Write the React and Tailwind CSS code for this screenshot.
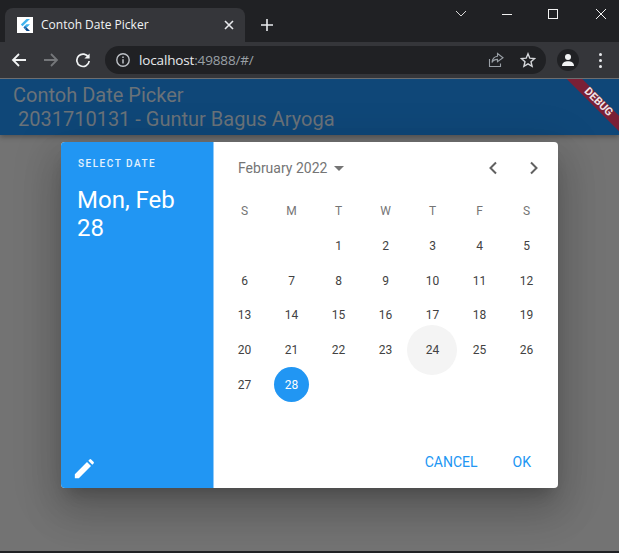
import React from "react";

const font = { fontFamily: "Roboto, sans-serif" };
const days = [
  ["", "", 1, 2, 3, 4, 5],
  [6, 7, 8, 9, 10, 11, 12],
  [13, 14, 15, 16, 17, 18, 19],
  [20, 21, 22, 23, 24, 25, 26],
  [27, 28, "", "", "", "", ""],
];

function FlutterLogo() {
  return (
    <svg width="16" height="16" viewBox="0 0 16 16">
      <rect width="16" height="16" fill="#fff" />
      <path d="M9.5 2 L13 2 L5.5 9.2 L3.8 7.5Z" fill="#42b4ee" />
      <path d="M9.3 7.3 L13 7.3 L9.6 10.8 L7.8 9Z" fill="#42b4ee" />
      <path d="M6.4 10.4 L8 8.8 L9.6 10.6 L8 12.2Z" fill="#1a6fb8" />
      <path d="M8 12.2 L9.6 10.6 L13 14 L9.6 14Z" fill="#0c4a8c" />
    </svg>
  );
}

export default function App() {
  return (
    <div className="w-[619px] h-[553px] overflow-hidden flex flex-col bg-[#202124]" style={font}>
      {/* Title bar */}
      <div className="h-[42px] flex items-end pl-[5px] bg-[#202124] shrink-0">
        <div className="w-[240px] h-[34px] bg-[#35363a] rounded-t-lg flex items-center pl-[12px] pr-[11px]">
          <FlutterLogo />
          <span className="ml-[8px] text-[12px] text-[#f1f3f4] flex-1" style={{ fontFamily: "'Open Sans', Roboto, sans-serif" }}>Contoh Date Picker</span>
          <svg width="10" height="10" viewBox="0 0 10 10"><path d="M1 1 L9 9 M9 1 L1 9" stroke="#e8eaed" strokeWidth="1.6" /></svg>
        </div>
        <svg className="ml-[15px] mb-[10px]" width="14" height="14" viewBox="0 0 14 14"><path d="M7 1 V13 M1 7 H13" stroke="#e8eaed" strokeWidth="1.6" /></svg>
        <div className="flex-1 self-start flex justify-end pt-[8px]">
          <svg className="mr-[35px] mt-[2px]" width="12" height="8" viewBox="0 0 12 8"><path d="M1 1 L6 6 L11 1" stroke="#d8d8d8" fill="none" /></svg>
          <svg className="mr-[36px]" width="10" height="12" viewBox="0 0 10 12"><path d="M0 6.5 H10" stroke="#f2f2f2" /></svg>
          <svg className="mr-[38px]" width="10" height="12" viewBox="0 0 10 12"><rect x="0.5" y="1.5" width="9" height="9" stroke="#f2f2f2" fill="none" /></svg>
          <svg className="mr-[13px]" width="10" height="12" viewBox="0 0 10 12"><path d="M0 1 L10 11 M10 1 L0 11" stroke="#f2f2f2" /></svg>
        </div>
      </div>

      {/* Toolbar */}
      <div className="h-[36px] bg-[#35363a] flex items-center shrink-0">
        <svg className="ml-[11px]" width="16" height="16" viewBox="0 0 16 16"><path d="M15 8 H2 M8 2 L2 8 L8 14" stroke="#f1f3f4" strokeWidth="1.8" fill="none" /></svg>
        <svg className="ml-[16px]" width="16" height="16" viewBox="0 0 16 16"><path d="M1 8 H14 M8 2 L14 8 L8 14" stroke="#75777a" strokeWidth="1.8" fill="none" /></svg>
        <svg className="ml-[16px]" width="16" height="16" viewBox="0 0 16 16"><path d="M13.6 5.5 A6.2 6.2 0 1 0 14.2 9" stroke="#f1f3f4" strokeWidth="1.7" fill="none" /><path d="M14.6 1.4 V6.6 H9.4Z" fill="#f1f3f4" /></svg>
        <div className="ml-[14px] w-[441px] h-[28px] rounded-full bg-[#202124] flex items-center pl-[10px] pr-[10px]">
          <svg width="16" height="16" viewBox="0 0 16 16"><circle cx="8" cy="8" r="6.2" stroke="#bdc1c6" strokeWidth="1.4" fill="none" /><path d="M8 7.2 V11.5 M8 4.5 V6" stroke="#bdc1c6" strokeWidth="1.5" /></svg>
          <span className="ml-[8px] text-[13.5px] text-[#e8eaed] flex-1" style={{ fontFamily: "'Open Sans', Roboto, sans-serif", letterSpacing: "-0.15px" }}>localhost<span className="text-[#9aa0a6]">:49888/#/</span></span>
          <svg width="16" height="16" viewBox="0 0 16 16"><path d="M1.5 7 V14.5 H12.5 V11.5" stroke="#9aa0a6" strokeWidth="1.1" fill="none" /><path d="M9.5 1.5 L15 5.8 L9.5 9.6 V7.4 C7 7.4 5 8.5 4 10.5 C4.3 7 6.5 4.5 9.5 4.2Z" stroke="#9aa0a6" strokeWidth="1.1" fill="none" /></svg>
          <svg className="ml-[16px]" width="16" height="16" viewBox="0 0 16 16"><path d="M8 1.8 L9.8 6.2 L14.6 6.6 L11 9.7 L12.1 14.4 L8 11.9 L3.9 14.4 L5 9.7 L1.4 6.6 L6.2 6.2Z" stroke="#d5d7da" strokeWidth="1.4" fill="none" /></svg>
        </div>
        <div className="ml-[11px] w-[22px] h-[22px] rounded-full bg-[#202124] flex items-center justify-center">
          <svg width="14" height="14" viewBox="0 0 14 14"><circle cx="7" cy="4" r="3" fill="#f1f3f4" /><path d="M1 13 C1 9.5 4 8.3 7 8.3 C10 8.3 13 9.5 13 13Z" fill="#f1f3f4" /></svg>
        </div>
        <div className="ml-[20px] flex flex-col gap-[3px]">
          <span className="w-[3px] h-[3px] rounded-full bg-[#e8eaed]" />
          <span className="w-[3px] h-[3px] rounded-full bg-[#e8eaed]" />
          <span className="w-[3px] h-[3px] rounded-full bg-[#e8eaed]" />
        </div>
      </div>
      <div className="h-px bg-[#6d6e70] shrink-0" />

      {/* Flutter page */}
      <div className="relative flex-1 flex flex-col bg-[#737373] overflow-hidden">
        <div className="h-[56px] shrink-0 bg-[#0f4778] pl-[13px] pt-[4px] text-[20px] leading-[24px] text-[#6a7278] whitespace-pre shadow-[0_2px_5px_rgba(0,0,0,0.3)]">
          {"Contoh Date Picker\n 2031710131 - Guntur Bagus Aryoga"}
        </div>

        <div className="absolute right-[-34px] top-[18px] w-[110px] h-[11px] bg-[#7a2036] rotate-45 flex items-center justify-center text-[11px] font-bold text-[#f0e6e8]">
          DEBUG
        </div>

        <div className="ml-[61px] mt-[7px] w-[497px] h-[346px] flex rounded-[4px] overflow-hidden bg-white shadow-[0_11px_15px_-7px_rgba(0,0,0,0.2),0_24px_38px_3px_rgba(0,0,0,0.14),0_9px_46px_8px_rgba(0,0,0,0.12)]">
          <div className="w-[153px] shrink-0 bg-[#2196f3] flex flex-col pl-[17px] pr-[16px] border-r border-[#90caf9]">
            <div className="mt-[16px] text-[10px] leading-[12px] font-medium tracking-[1.5px] text-[#e3f2fd]">SELECT DATE</div>
            <div className="mt-[16px] text-[24px] leading-[28px] text-white -ml-px">Mon, Feb 28</div>
            <svg className="mt-auto mb-[9px] -ml-[4px]" width="20" height="20" viewBox="0 0 24 24">
              <path d="M1 23 V18.2 L15.6 3.6 L20.4 8.4 L5.8 23Z M17.2 2 L18.6 0.6 A1.4 1.4 0 0 1 20.6 0.6 L23.4 3.4 A1.4 1.4 0 0 1 23.4 5.4 L22 6.8Z" fill="#fff" />
            </svg>
          </div>

          <div className="flex-1 flex flex-col pl-[7px] pr-[8px]">
            <div className="h-[26px] mt-[13px] flex items-center pl-[17px]">
              <span className="text-[14px] text-[#757575]">February 2022</span>
              <svg className="ml-[7px]" width="10" height="5" viewBox="0 0 10 5"><path d="M0 0 H10 L5 5Z" fill="#757575" /></svg>
              <svg className="ml-auto mr-[31px]" width="10" height="14" viewBox="0 0 10 14"><path d="M8 1.5 L2.5 7 L8 12.5" stroke="#616161" strokeWidth="2" fill="none" /></svg>
              <svg className="mr-[11px]" width="10" height="14" viewBox="0 0 10 14"><path d="M2 1.5 L7.5 7 L2 12.5" stroke="#616161" strokeWidth="2" fill="none" /></svg>
            </div>

            <div className="grid grid-cols-7 mt-[19px] h-[31px] items-center text-[12px] text-[#757575] text-center">
              {["S", "M", "T", "W", "T", "F", "S"].map((d, i) => <span key={i} className="-mt-[9px]">{d}</span>)}
            </div>

            <div className="grid grid-cols-7 grid-rows-[repeat(5,34.7px)] text-[12px] text-[#424242] text-center -mt-[2.5px]">
              {days.flat().map((d, i) => (
                <div key={i} className="flex items-center justify-center relative">
                  {d === 24 && <span className="absolute left-[-2px] top-[-8px] w-[50px] h-[50px] rounded-full bg-[#f4f4f4]" />}
                  {d === 28 ? (
                    <span className="w-[35px] h-[35px] rounded-full bg-[#2196f3] text-white flex items-center justify-center">28</span>
                  ) : (
                    <span className="relative">{d}</span>
                  )}
                </div>
              ))}
            </div>

            <div className="mt-auto h-[36px] mb-[8px] flex items-center justify-end pr-[19px] text-[14px] text-[#2196f3]">
              <span>CANCEL</span>
              <span className="ml-[35px]">OK</span>
            </div>
          </div>
        </div>

        <div className="mt-auto h-[2px] bg-[#202124] shrink-0" />
      </div>
    </div>
  );
}
